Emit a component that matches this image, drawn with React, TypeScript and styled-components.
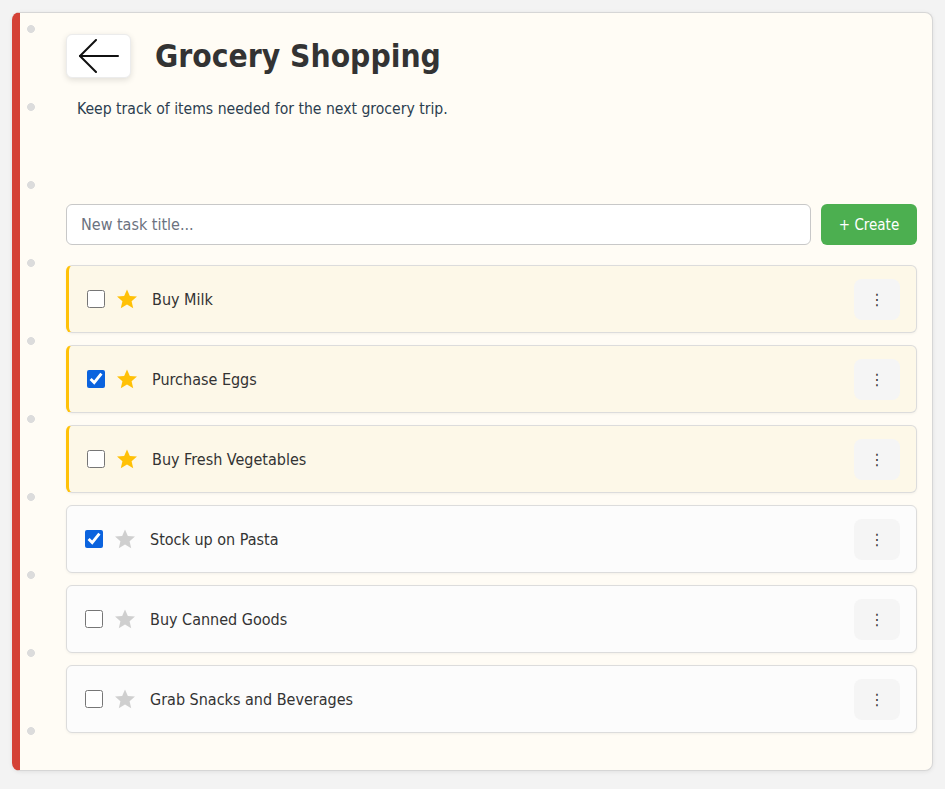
import React, { useState } from "react";
import styled, { createGlobalStyle } from "styled-components";

const GlobalStyle = createGlobalStyle`
  html, body { margin: 0; padding: 0; }
  body {
    background: #f3f3f3;
    font-family: "DejaVu Sans Condensed", "DejaVu Sans", sans-serif;
    color: #333;
  }
  * { box-sizing: border-box; }
`;

const Page = styled.div`
  padding: 12px 12px 18px 12px;
`;

const Notebook = styled.div`
  position: relative;
  background: #fffcf5;
  border: 1px solid #d6d6d6;
  border-left: 8px solid #d44236;
  border-radius: 8px;
  box-shadow: 0 1px 4px rgba(0, 0, 0, 0.08);
  padding: 21px 15px 36px 46px;
  min-height: 759px;
  &::before {
    content: "";
    position: absolute;
    left: 6px;
    top: 11px;
    bottom: 0;
    width: 10px;
    background-image: radial-gradient(circle at 5px 5px, #dcdcdc 3.6px, transparent 4.2px);
    background-size: 10px 78px;
    background-repeat: repeat-y;
    pointer-events: none;
  }
`;

const Header = styled.header`
  display: flex;
  align-items: center;
  gap: 24px;
`;

const BackButton = styled.button`
  width: 65px;
  height: 44px;
  background: #fff;
  border: 1px solid #ececec;
  border-radius: 6px;
  box-shadow: 0 2px 6px rgba(0, 0, 0, 0.12);
  display: flex;
  align-items: center;
  justify-content: center;
  padding: 0;
  cursor: pointer;
`;

const Title = styled.h1`
  margin: 0;
  font-size: 31.5px;
  font-weight: bold;
  color: #333;
  letter-spacing: 0;
`;

const Subtitle = styled.p`
  margin: 22px 0 0 11px;
  font-size: 15.6px;
  color: #2c3e50;
`;

const Composer = styled.div`
  display: flex;
  gap: 10px;
  margin-top: 86px;
`;

const TitleInput = styled.input`
  flex: 1;
  height: 41px;
  border: 1px solid #c8c8c8;
  border-radius: 6px;
  background: #fff;
  padding: 0 14px;
  font-family: inherit;
  font-size: 16px;
  color: #333;
  &::placeholder { color: #6b7280; }
`;

const CreateButton = styled.button`
  width: 96px;
  height: 41px;
  background: #4caf50;
  color: #fff;
  border: none;
  border-radius: 6px;
  font-family: inherit;
  font-size: 15px;
  cursor: pointer;
`;

const List = styled.ul`
  list-style: none;
  margin: 20px 0 0 0;
  padding: 0;
  display: flex;
  flex-direction: column;
  gap: 12px;
`;

const Item = styled.li<{ $starred: boolean }>`
  display: flex;
  align-items: center;
  height: 68px;
  padding: 0 16px 0 18px;
  background: ${(p) => (p.$starred ? "#fdf8e8" : "#fcfcfc")};
  border: 1px solid #dcdcdc;
  border-left: ${(p) => (p.$starred ? "3px solid #ffc107" : "1px solid #dcdcdc")};
  border-radius: 6px;
  box-shadow: 0 1px 3px rgba(0, 0, 0, 0.05);
`;

const Check = styled.input`
  width: 18px;
  height: 18px;
  margin: 0;
  accent-color: #0b63de;
`;

const Star = styled.span<{ $on: boolean }>`
  display: flex;
  margin-left: 11px;
  color: ${(p) => (p.$on ? "#ffc107" : "#cfcfcf")};
`;

const Label = styled.span`
  margin-left: 14px;
  flex: 1;
  font-size: 16px;
  color: #333;
`;

const MenuButton = styled.button`
  width: 46px;
  height: 41px;
  background: #f5f5f5;
  border: none;
  border-radius: 8px;
  font-family: inherit;
  font-size: 16px;
  color: #333;
  cursor: pointer;
`;

const ArrowIcon = () => (
  <svg width="42" height="34" viewBox="0 0 42 34" fill="none" stroke="#111" strokeWidth="2" strokeLinecap="round" strokeLinejoin="round">
    <path d="M40 17H2" />
    <path d="M18 1L2 17L18 33" />
  </svg>
);

const StarIcon = () => (
  <svg width="22" height="22" viewBox="0 0 24 24" fill="currentColor">
    <path d="M12 1.5l3.1 7.2 7.8.6-5.9 5.1 1.8 7.6L12 17.9 5.2 22l1.8-7.6-5.9-5.1 7.8-.6z" />
  </svg>
);

type Task = { id: number; title: string; done: boolean; starred: boolean };

const initial: Task[] = [
  { id: 1, title: "Buy Milk", done: false, starred: true },
  { id: 2, title: "Purchase Eggs", done: true, starred: true },
  { id: 3, title: "Buy Fresh Vegetables", done: false, starred: true },
  { id: 4, title: "Stock up on Pasta", done: true, starred: false },
  { id: 5, title: "Buy Canned Goods", done: false, starred: false },
  { id: 6, title: "Grab Snacks and Beverages", done: false, starred: false },
];

export default function App() {
  const [tasks, setTasks] = useState(initial);
  const toggle = (id: number) =>
    setTasks((ts) => ts.map((t) => (t.id === id ? { ...t, done: !t.done } : t)));
  return (
    <Page>
      <GlobalStyle />
      <Notebook>
        <Header>
          <BackButton aria-label="Back">
            <ArrowIcon />
          </BackButton>
          <Title>Grocery Shopping</Title>
        </Header>
        <Subtitle>Keep track of items needed for the next grocery trip.</Subtitle>
        <Composer>
          <TitleInput placeholder="New task title..." />
          <CreateButton>+ Create</CreateButton>
        </Composer>
        <List>
          {tasks.map((t) => (
            <Item key={t.id} $starred={t.starred}>
              <Check type="checkbox" checked={t.done} onChange={() => toggle(t.id)} />
              <Star $on={t.starred}>
                <StarIcon />
              </Star>
              <Label>{t.title}</Label>
              <MenuButton>⋮</MenuButton>
            </Item>
          ))}
        </List>
      </Notebook>
    </Page>
  );
}
